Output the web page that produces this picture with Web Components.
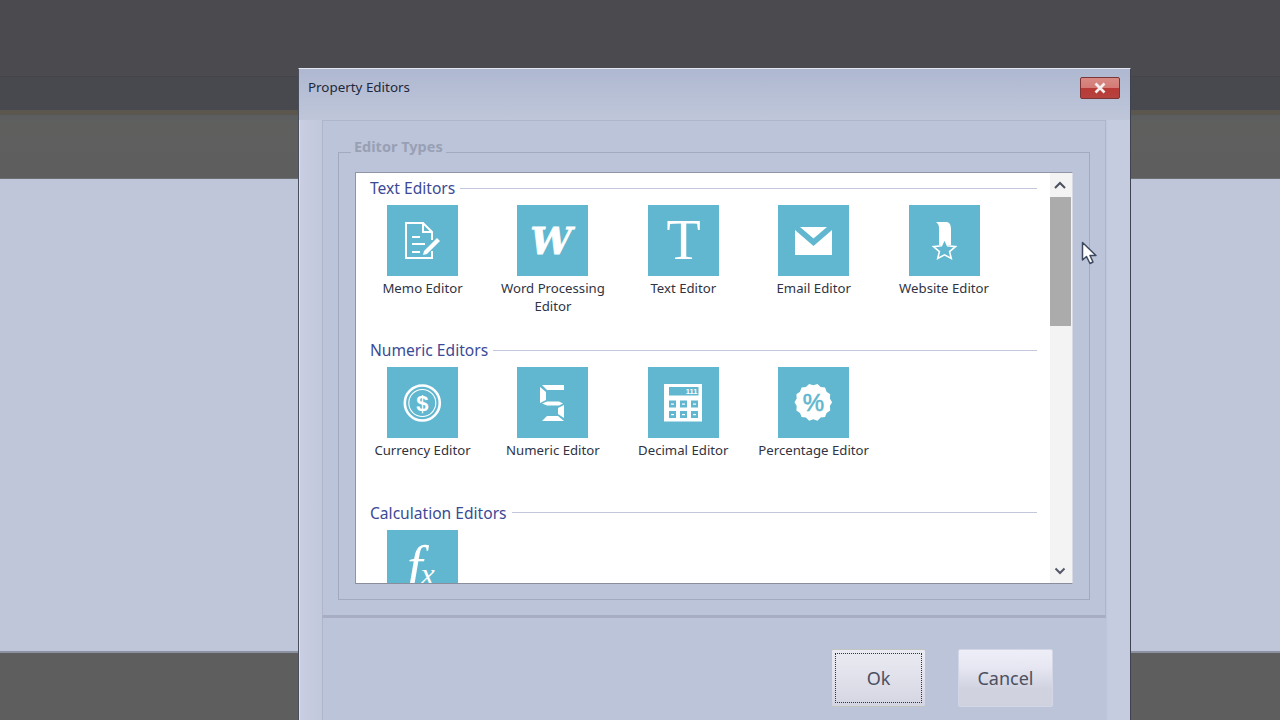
<!DOCTYPE html>
<html><head><meta charset="utf-8"><style>
html,body{margin:0;padding:0;width:1280px;height:720px;overflow:hidden;background:#4b4b4f}
</style></head><body>
<x-app>
<x-dialog heading="Property Editors">
  <x-group legend="Editor Types">
    <x-list>
      <x-section heading="Text Editors">
        <x-tile icon="memo">Memo Editor</x-tile>
        <x-tile icon="word">Word Processing Editor</x-tile>
        <x-tile icon="text">Text Editor</x-tile>
        <x-tile icon="email">Email Editor</x-tile>
        <x-tile icon="web">Website Editor</x-tile>
      </x-section>
      <x-section heading="Numeric Editors">
        <x-tile icon="currency">Currency Editor</x-tile>
        <x-tile icon="numeric">Numeric Editor</x-tile>
        <x-tile icon="decimal">Decimal Editor</x-tile>
        <x-tile icon="percent">Percentage Editor</x-tile>
      </x-section>
      <x-section heading="Calculation Editors">
        <x-tile icon="fx"></x-tile>
      </x-section>
    </x-list>
  </x-group>
  <x-button slot="footer" focused>Ok</x-button>
  <x-button slot="footer">Cancel</x-button>
</x-dialog>
<x-cursor></x-cursor>
</x-app>
<script>
const FONT = '"Noto Sans","DejaVu Sans",sans-serif';
const T = '#61b7cf';
const calcBtn = (x,y)=>`<rect x="${x}" y="${y}" width="7" height="7" fill="${T}"/><rect x="${x+2}" y="${y+3}" width="3" height="1.2" fill="#fff"/>`;
const ICONS = {
 memo:`<path d="M45 35V27L36 18H19V53H45V46" fill="none" stroke="#fff" stroke-width="2"/><path d="M36 18V27H45" fill="none" stroke="#fff" stroke-width="2"/>
   <path d="M25 32H33M25 39H38M25 47H33" stroke="#fff" stroke-width="2"/><path d="M37 46L50 33L53 36L40 49L36 50Z" fill="#fff"/>`,
 word:`<text x="34" y="49" text-anchor="middle" font-family="DejaVu Serif" font-weight="700" font-style="italic" font-size="37" fill="#fff" stroke="#fff" stroke-width=".8">W</text>`,
 text:`<text x="35.500" y="54" text-anchor="middle" font-family="Liberation Serif" font-size="56" fill="#fff">T</text>`,
 email:`<path d="M22 22H49L35.500 33.500Z" fill="#fff"/><path d="M17 25L35.500 41L54 25V50H17Z" fill="#fff"/>`,
 web:`<path d="M27 17H38Q42 18 42 24V40H30V23Q30 19 27 17Z" fill="#fff"/>
   <path d="M35.500 34L38.600 40.800L46.500 41.600L40.600 46.600L42.300 53.500L35.500 49.900L28.700 53.500L30.400 46.600L24.500 41.600L32.400 40.800Z" fill="${T}" stroke="#fff" stroke-width="1.600"/>`,
 currency:`<circle cx="35.300" cy="36" r="17.500" fill="none" stroke="#fff" stroke-width="2.600"/><circle cx="35.300" cy="36" r="13.500" fill="none" stroke="#fff" stroke-width="1.100"/>
   <text x="35.300" y="44" text-anchor="middle" font-family="Liberation Sans" font-weight="700" font-size="22" fill="#fff">$</text>`,
 numeric:`<g fill="#fff"><path d="M25 18H47V23H30Z"/><path d="M23 20L29 25V33L23 36Z"/><path d="M25 36.500L30 34.500H42L46 36.500L42 38.500H30Z"/><path d="M47 38L47 51L41 47V41Z"/><path d="M25 54L30 49H41L47 54Z"/></g>`,
 decimal:`<rect x="16" y="17" width="38" height="37.500" fill="#fff"/><rect x="21" y="20" width="29.500" height="8.500" fill="${T}"/>
   <text x="49.500" y="27" text-anchor="end" font-family="Liberation Sans" font-weight="700" font-size="7.500" fill="#fff">111</text>
   ${calcBtn(21,33.500)}${calcBtn(32,33.500)}${calcBtn(43,33.500)}${calcBtn(21,44)}${calcBtn(32,44)}${calcBtn(43,44)}`,
 percent:`<path fill="#fff" d="${(()=>{let p='';const n=14;for(let i=0;i<n*2;i++){const r=i%2?17:18.800,a=i*Math.PI/n;p+=(i?'L':'M')+(35.300+r*Math.cos(a)).toFixed(2)+' '+(35.300+r*Math.sin(a)).toFixed(2)}return p+'Z'})()}"/>
   <text x="35.300" y="44" text-anchor="middle" font-family="Liberation Sans" font-size="24" fill="${T}" stroke="${T}" stroke-width=".6">%</text>`,
 fx:`<text x="20" y="55" font-family="Liberation Serif" font-style="italic" font-size="56" fill="#fff">f<tspan font-size="32" dx="-2">x</tspan></text>`
};
function define(name, css, html){
  customElements.define(name, class extends HTMLElement{
    connectedCallback(){
      if(this.shadowRoot) return;
      const r=this.attachShadow({mode:'open'});
      r.innerHTML=`<style>${css}</style>`+(typeof html==='function'?html(this):html);
    }
  });
}
define('x-app',`:host{display:flex;flex-direction:column;width:1280px;height:720px;position:relative;overflow:hidden;background:#4b4b4f}
 .a{height:77px;background:#4b4b4f;border-bottom:1px solid #444449;box-sizing:border-box}
 .b{height:33px;background:#48484f}
 .c{height:5px;background:#5b574f}
 .d{height:64px;background:linear-gradient(#5b5e60,#5f5f5e 15%,#5e5e5e);border-bottom:1px solid #6b7072;box-sizing:border-box}
 .e{height:474px;background:#c0c6da;border-bottom:2px solid #8d92a3;box-sizing:border-box}
 .f{flex:1;background:#5e5e5e}`,
 `<div class="a"></div><div class="b"></div><div class="c"></div><div class="d"></div><div class="e"></div><div class="f"></div><slot></slot>`);
define('x-dialog',`:host{position:absolute;left:298px;top:68px;width:833px;height:672px;box-sizing:border-box;display:flex;flex-direction:column;
   background:linear-gradient(90deg,#c9cee2 0,#c2c8dc 23px,#bcc4d9 24px,#bcc4d9 calc(100% - 24px),#c6cce0 calc(100% - 22px));
   border:1px solid #3f4350;border-top:1px solid #e4e7f2;border-left-color:#4a4e5c;box-shadow:inset 1px 0 0 #dfe2ef;font-family:${FONT}}
 header{height:51px;flex:none;display:flex;align-items:flex-start;justify-content:space-between;padding:8px 10px 0 9px;box-sizing:border-box;
   background:linear-gradient(#aeb8d0,#bac2d7 70%,#bfc6da)}
 h1{margin:0;font:400 13.400px/20px ${FONT};color:#22283a}
 .close{width:40px;height:22px;box-sizing:border-box;border:1px solid #7c3434;border-radius:2px;background:linear-gradient(#d88a85 0,#d47b76 48%,#b83a36 52%,#b5423e);display:flex;align-items:center;justify-content:center}
 .main{flex:none;height:498px;margin:0 24px 0 23px;box-sizing:border-box;border:1px solid #aeb6cc;border-bottom:3px solid #a7aec4;padding:31px 15px 15px 15px;display:flex}
 .foot{flex:1;margin:0 24px 0 23px;border-left:1px solid #aeb6cc;box-sizing:border-box;display:flex;gap:32px;justify-content:flex-end;align-items:flex-start;padding:31px 53px 0 0}`,
 el=>`<header><h1>${el.getAttribute('heading')}</h1><div class="close"><svg width="14" height="12" viewBox="0 0 14 12"><path d="M2.500 1.500L11.500 10.500M11.500 1.500L2.500 10.500" stroke="#f4eeee" stroke-width="2.600"/></svg></div></header>
 <div class="main"><slot></slot></div><div class="foot"><slot name="footer"></slot></div>`);
define('x-group',`:host{display:flex;flex:1;position:relative;box-sizing:border-box;border:1px solid #a2aac2;padding:19px 16px 16px 16px}
 .legend{position:absolute;left:12px;top:-15px;padding:0 3px;background:#bcc4d9;font:700 14.500px/16px ${FONT};color:#98a0b4}`,
 el=>`<div class="legend">${el.getAttribute('legend')}</div><slot></slot>`);
define('x-list',`:host{display:flex;flex:1;min-width:0;background:#fff;border:1px solid #8f94a6;border-right-color:#d8dbe6;border-bottom-color:#8a8e9c;box-sizing:border-box;height:412px;overflow:hidden}
 .content{flex:1;min-width:0;height:100%;overflow:hidden;padding:5px 13px 0 14px;box-sizing:border-box}
 .bar{flex:none;width:22px;background:#f3f3f4;display:flex;flex-direction:column;align-items:flex-start}
 .btn{height:24px;flex:none;display:flex;align-items:center;justify-content:center;width:20px}
 .thumb{height:129px;width:21px;background:#ababab;flex:none}
 .sp{flex:1}`,
 `<div class="content"><slot></slot></div><div class="bar"><div class="btn"><svg width="12" height="8" viewBox="0 0 12 8"><path d="M1 7L6 2L11 7" fill="none" stroke="#4b5060" stroke-width="2"/></svg></div><div class="thumb"></div><div class="sp"></div><div class="btn"><svg width="12" height="8" viewBox="0 0 12 8"><path d="M1.500 1.500L6 6L10.500 1.500" fill="none" stroke="#55586a" stroke-width="2"/></svg></div></div>`);
define('x-section',`:host{display:block;height:162.400px}
 .h{display:flex;align-items:center;gap:5px;height:20px;font:400 15.600px/20px ${FONT};color:#3a4a96;white-space:nowrap}
 .h i{flex:1;height:1px;background:#c3c7dc}
 .t{display:grid;grid-template-columns:repeat(5,130.400px);margin:7px 0 0 -12.700px}`,
 el=>`<div class="h"><span>${el.getAttribute('heading')}</span><i></i></div><div class="t"><slot></slot></div>`);
define('x-tile',`:host{display:flex;flex-direction:column;align-items:center;font:400 13.200px/18px ${FONT};color:#2f3342;text-align:center}
 svg{display:block;width:71px;height:71px;background:${T}}
 .l{margin-top:3px;width:126px}`,
 el=>`<svg viewBox="0 0 71 71">${ICONS[el.getAttribute('icon')]}</svg><div class="l"><slot></slot></div>`);
define('x-button',`:host{display:flex;width:95px;height:58px;box-sizing:border-box;padding:3px;align-items:stretch;justify-content:stretch;border:1px solid #d3d6e4;border-radius:2px;background:linear-gradient(#eeeef8,#e6e7f2 30%,#d0d2e0 70%,#cfd1de);font:400 18px/1 ${FONT};color:#4b5061;flex:none}
 :host([focused]){border-color:#c3c5c2;background:linear-gradient(#eaeaf2,#e2e3ec 40%,#d4d5e2)}
 .in{flex:1;display:flex;align-items:center;justify-content:center;border:1px dotted transparent}
 :host([focused]) .in{border:1px dotted #333}`,
 `<div class="in"><slot></slot></div>`);
define('x-cursor',`:host{position:absolute;left:1081px;top:241px;width:18px;height:24px;display:block}`,
 `<svg width="18" height="24" viewBox="0 0 18 24"><path d="M1.500 1.500V19L5.500 15.500L9 22.500L12 21L9 14.500H15Z" fill="#fff" stroke="#3f4960" stroke-width="1.500" stroke-linejoin="round"/></svg>`);
</script>
</body></html>
